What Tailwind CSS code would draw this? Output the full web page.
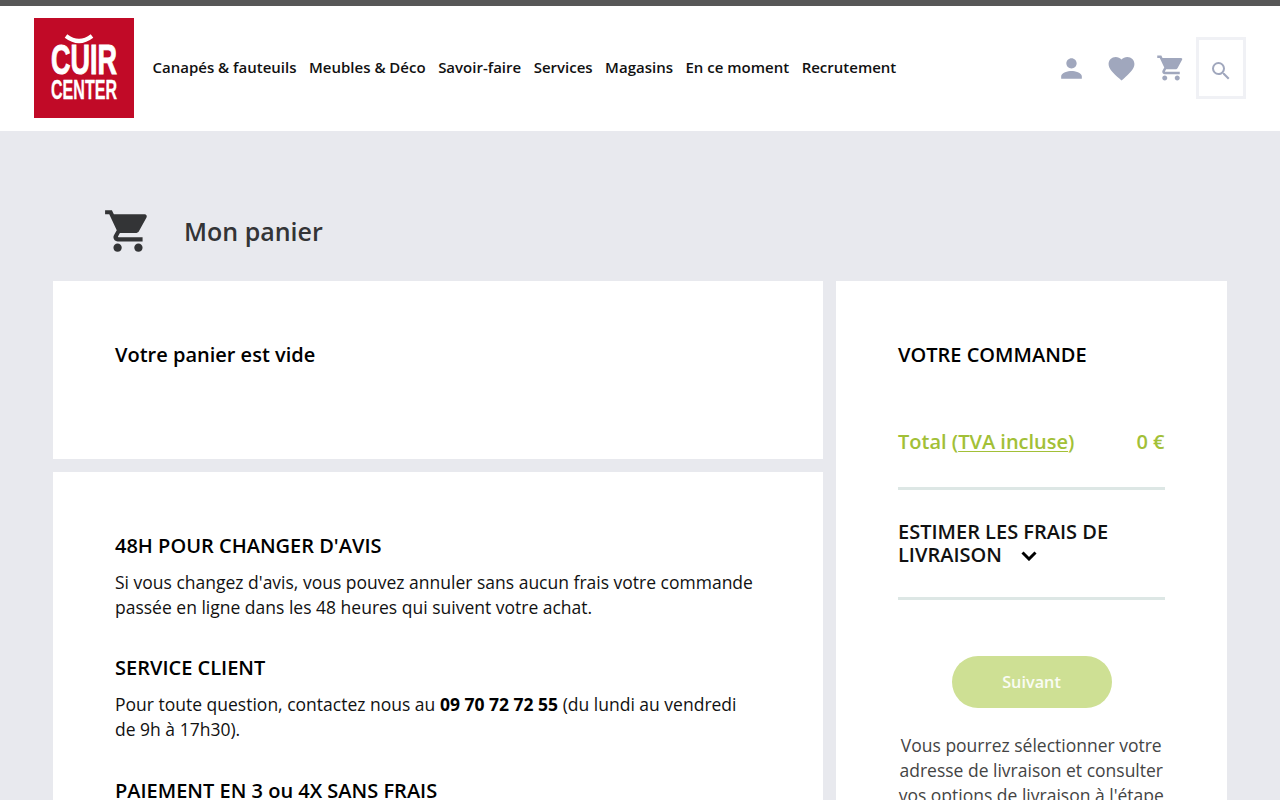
<!DOCTYPE html>
<html lang="fr">
<head>
  <meta charset="UTF-8" />
  <meta name="viewport" content="width=device-width, initial-scale=1.0" />
  <title>Mon panier - Cuir Center</title>
  <script src="https://cdn.jsdelivr.net/npm/@tailwindcss/browser@4"></script>
</head>
<body class="h-screen overflow-hidden bg-[#e8e9ee] font-['Open_Sans',sans-serif] text-[#111]">
  <header class="h-[130.5px] border-t-6 border-[#575757] bg-white flex items-start pl-[34px] pr-[34px]">
    <a href="#" class="mt-3 shrink-0">
      <svg class="block size-[100px]" viewBox="0 0 100 100" fill="#fff" font-family="Liberation Sans, sans-serif" font-weight="700">
        <rect width="100" height="100" fill="#c10a27" />
        <path d="M32 18Q45 28 58 18" fill="none" stroke="#fff" stroke-width="4.2" />
        <text x="17" y="55.5" font-size="42" textLength="66" lengthAdjust="spacingAndGlyphs" stroke="#fff" stroke-width="1">CUIR</text>
        <text x="17" y="80.5" font-size="27" textLength="66" lengthAdjust="spacingAndGlyphs" stroke="#fff" stroke-width=".3">CENTER</text>
      </svg>
    </a>

    <nav class="ml-[18.5px] mt-[49px] flex gap-[12.5px] text-[15px] leading-6 font-semibold whitespace-nowrap">
      <a href="#">Canapés &amp; fauteuils</a>
      <a href="#">Meubles &amp; Déco</a>
      <a href="#">Savoir-faire</a>
      <a href="#">Services</a>
      <a href="#">Magasins</a>
      <a href="#">En ce moment</a>
      <a href="#">Recrutement</a>
    </nav>

    <div class="ml-auto mt-[31px] flex items-center text-[#a0a7bd]">
      <svg class="size-[31px] mr-[19px]" viewBox="0 0 24 24" fill="currentColor"><path d="M12 12c2.21 0 4-1.79 4-4s-1.79-4-4-4-4 1.79-4 4 1.79 4 4 4zm0 2c-2.67 0-8 1.34-8 4v2h16v-2c0-2.66-5.33-4-8-4z" /></svg>
      <svg class="size-[31px] mr-[19px]" viewBox="0 0 24 24" fill="currentColor"><path d="M12 21.35l-1.45-1.32C5.4 15.36 2 12.28 2 8.5 2 5.42 4.42 3 7.5 3c1.74 0 3.41.81 4.5 2.09C13.09 3.81 14.76 3 16.5 3 19.58 3 22 5.42 22 8.5c0 3.78-3.4 6.86-8.55 11.54L12 21.35z" /></svg>
      <svg class="size-[30px] mr-[10px]" viewBox="0 0 24 24" fill="currentColor"><path d="M7 18c-1.1 0-1.99.9-1.99 2S5.9 22 7 22s2-.9 2-2-.9-2-2-2zM1 2v2h2l3.6 7.59-1.35 2.45c-.16.28-.25.61-.25.96 0 1.1.9 2 2 2h12v-2H7.42c-.14 0-.25-.11-.25-.25l.03-.12.9-1.63h7.45c.75 0 1.41-.41 1.75-1.03l3.58-6.49A1 1 0 0 0 20 4H5.21l-.94-2H1zm16 16c-1.1 0-1.99.9-1.99 2s.89 2 1.99 2 2-.9 2-2-.9-2-2-2z" /></svg>
      <button class="w-[50px] h-[62px] border-[3px] border-[#f0f1f5] flex items-center justify-center pt-[5px]">
        <svg class="size-6 shrink-0" viewBox="0 0 24 24" fill="currentColor"><path d="M15.5 14h-.79l-.28-.27A6.47 6.47 0 0 0 16 9.5 6.5 6.5 0 1 0 9.5 16c1.61 0 3.09-.59 4.23-1.57l.27.28v.79l5 4.99L20.49 19l-4.99-5zm-6 0C7.01 14 5 11.99 5 9.5S7.01 5 9.5 5 14 7.01 14 9.5 11.99 14 9.5 14z" /></svg>
      </button>
    </div>
  </header>

  <main class="pl-[52.5px]">
    <div class="h-[150px] pl-[50px] pt-[75px] flex items-start text-[#333436]">
      <svg class="size-[50px]" viewBox="0 0 24 24" fill="currentColor"><path d="M7 18c-1.1 0-1.99.9-1.99 2S5.9 22 7 22s2-.9 2-2-.9-2-2-2zM1 2v2h2l3.6 7.59-1.35 2.45c-.16.28-.25.61-.25.96 0 1.1.9 2 2 2h12v-2H7.42c-.14 0-.25-.11-.25-.25l.03-.12.9-1.63h7.45c.75 0 1.41-.41 1.75-1.03l3.58-6.49A1 1 0 0 0 20 4H5.21l-.94-2H1zm16 16c-1.1 0-1.99.9-1.99 2s.89 2 1.99 2 2-.9 2-2-.9-2-2-2z" /></svg>
      <h1 class="ml-[31.5px] mt-[8px] text-[25px] leading-[34px] font-semibold">Mon panier</h1>
    </div>

    <div class="flex gap-[12.5px]">
      <div class="w-[770.5px] flex flex-col gap-[12.5px]">
        <section class="h-[178.5px] bg-white px-[62.5px] pt-[61px]">
          <h2 class="text-[20px] leading-[25px] font-semibold text-black">Votre panier est vide</h2>
        </section>

        <section class="h-[400px] bg-white px-[62.5px] pt-[61px] text-[17.5px] leading-[25px]">
          <h2 class="mb-[12px] text-[20px] leading-[25px] font-semibold text-black">48H POUR CHANGER D'AVIS</h2>
          <p class="mb-[35.5px]">Si vous changez d'avis, vous pouvez annuler sans aucun frais votre commande passée en ligne dans les 48 heures qui suivent votre achat.</p>
          <h2 class="mb-[12px] text-[20px] leading-[25px] font-semibold text-black">SERVICE CLIENT</h2>
          <p class="mb-9">Pour toute question, contactez nous au <b class="text-black">09 70 72 72 55</b> (du lundi au vendredi de 9h à 17h30).</p>
          <h2 class="text-[20px] leading-[25px] font-semibold text-black">PAIEMENT EN 3 ou 4X SANS FRAIS</h2>
        </section>
      </div>

      <aside class="w-[391.5px] h-[600px] bg-white px-[62.5px] pt-[61px]">
        <h2 class="text-[20px] leading-[25px] font-semibold text-black">VOTRE COMMANDE</h2>
        <div class="mt-[62px] h-[61px] border-b-[3px] border-[#dde7e5] flex justify-between text-[20px] leading-[26px] font-semibold text-[#a2c037]">
          <span>Total (<u class="decoration-1 underline-offset-2">TVA incluse</u>)</span>
          <span>0 €</span>
        </div>
        <div class="h-[110px] border-b-[3px] border-[#dde7e5] pt-[30px] text-[20px] leading-[23px] font-semibold">
          ESTIMER LES FRAIS DE LIVRAISON
          <svg class="inline-block ml-[14px] w-4 h-[10px] align-[1px]" viewBox="0 0 16 10" fill="none" stroke="#000" stroke-width="3"><path d="M1.5 1.5L8 8l6.5-6.5" /></svg>
        </div>
        <button class="mt-[56px] ml-[53.5px] block w-[160px] h-[52px] pt-0.5 rounded-full bg-[#cee094] text-[16.25px] font-semibold text-white/90">Suivant</button>
        <p class="mt-[25px] -mx-1 text-center text-[17.5px] leading-[25px] text-[#444]">Vous pourrez sélectionner votre<br />adresse de livraison et consulter<br />vos options de livraison à l'étape<br />suivante.</p>
      </aside>
    </div>
  </main>
</body>
</html>
